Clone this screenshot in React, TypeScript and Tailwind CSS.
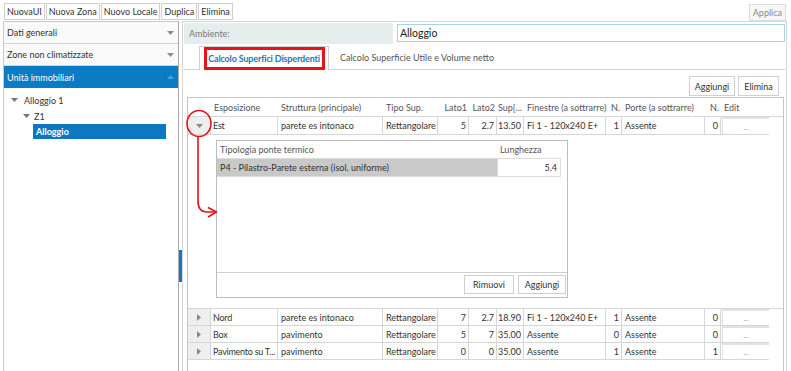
import React from "react";

const cols = [23, 67, 105, 55, 31, 28, 27, 82, 16, 83, 16, 48];

function TriDown({ color = "#7a7a7a" }: { color?: string }) {
  return (
    <svg width="7" height="4" viewBox="0 0 7 4">
      <polygon points="0,0 7,0 3.5,4" fill={color} />
    </svg>
  );
}
function TriUp({ color = "#7a7a7a" }: { color?: string }) {
  return (
    <svg width="7" height="4" viewBox="0 0 7 4">
      <polygon points="0,4 7,4 3.5,0" fill={color} />
    </svg>
  );
}
function TriRight() {
  return (
    <svg width="4" height="7" viewBox="0 0 4 7">
      <polygon points="0,0 4,3.5 0,7" fill="#8a8a8a" />
    </svg>
  );
}

const headers: { t: string; r?: boolean }[] = [
  { t: "" },
  { t: "Esposizione" },
  { t: "Struttura (principale)" },
  { t: "Tipo Sup." },
  { t: "Lato1", r: true },
  { t: "Lato2", r: true },
  { t: "Sup[...", r: true },
  { t: "Finestre (a sottrarre)" },
  { t: "N.", r: true },
  { t: "Porte (a sottrarre)" },
  { t: "N.", r: true },
  { t: "Edit" },
];

const rightCols = new Set([4, 5, 6, 8, 10]);

type Row = string[];
const rowEst: Row = ["Est", "parete es intonaco", "Rettangolare", "5", "2.7", "13.50", "Fi 1 - 120x240 E+", "1", "Assente", "0"];
const rowsBottom: Row[] = [
  ["Nord", "parete es intonaco", "Rettangolare", "7", "2.7", "18.90", "Fi 1 - 120x240 E+", "1", "Assente", "0"],
  ["Box", "pavimento", "Rettangolare", "5", "7", "35.00", "Assente", "0", "Assente", "0"],
  ["Pavimento su T...", "pavimento", "Rettangolare", "0", "0", "35.00", "Assente", "1", "Assente", "1"],
];

function DataRow({ row, expanded, h, top }: { row: Row; expanded?: boolean; h: number; top?: boolean }) {
  return (
    <div className={"flex " + (top ? "border-t border-[#d6d6d6]" : "")} style={{ height: h }}>
      <div
        className="flex items-center justify-center bg-[#efefef] border-r border-b border-[#d6d6d6] shrink-0"
        style={{ width: cols[0] }}
      >
        {expanded ? <TriDown color="#8a8a8a" /> : <TriRight />}
      </div>
      {row.map((c, i) => (
        <div
          key={i}
          className={
            "flex items-center border-r border-b border-[#d6d6d6] overflow-hidden whitespace-nowrap shrink-0 " +
            (rightCols.has(i + 1) ? "justify-end pr-[2px]" : i === 0 ? "pl-[2px] tracking-[-0.25px]" : "pl-[3px]")
          }
          style={{ width: cols[i + 1] }}
        >
          {c}
        </div>
      ))}
      <div className="border-b border-[#d6d6d6] shrink-0 flex flex-col" style={{ width: cols[11] }}>
        <div className="h-[2px] bg-[#e2e2e2] ml-[1px]" />
        <div className="flex-1 ml-[1px] border-l border-[#e0e0e0] flex items-center justify-center text-[#9a9a9a] text-[8px] leading-none">
          ...
        </div>
      </div>
    </div>
  );
}

export default function App() {
  return (
    <div className="w-[791px] h-[371px] overflow-hidden bg-white relative font-['Lato',sans-serif] text-[9px] text-[#333] leading-none whitespace-nowrap">
      {/* toolbar */}
      <div className="h-[21px] flex items-start justify-between pt-[3px] pl-[4px] pr-[5px]">
        <div className="flex gap-[1px]">
          {["NuovaUI", "Nuova Zona", "Nuovo Locale", "Duplica", "Elimina"].map((b) => (
            <div key={b} className="h-[17px] px-[2px] border border-[#cfcfcf] bg-white flex items-center text-[#333]">
              {b}
            </div>
          ))}
        </div>
        <div className="h-[17px] mt-[1px] px-[3px] border border-[#dedede] bg-[#f7f7f7] flex items-center text-[#8a8a8a]">
          Applica
        </div>
      </div>

      <div className="flex h-[350px]">
        {/* left panel */}
        <div className="ml-[3px] w-[176px] border-l border-r border-t border-[#c9c9c9] border-r-[#a9a9a9] flex flex-col">
          <div className="h-[22px] border-b border-[#d4d4d4] bg-[#fafafa] flex items-center justify-between pl-[3px] pr-[4px] text-[#333]">
            <span>Dati generali</span>
            <TriDown color="#8c8c8c" />
          </div>
          <div className="h-[22px] border-b border-[#d4d4d4] bg-[#fafafa] flex items-center justify-between pl-[3px] pr-[4px] text-[#333]">
            <span>Zone non climatizzate</span>
            <TriDown color="#8c8c8c" />
          </div>
          <div className="h-[22px] bg-[#0b7cc3] flex items-center justify-between pl-[3px] pr-[4px] text-white">
            <span>Unità immobiliari</span>
            <TriUp color="#4d9fd4" />
          </div>
          <div className="pt-[4px] flex flex-col">
            <div className="h-[16px] flex items-center pl-[7px] gap-[6px]">
              <TriDown color="#777" />
              <span>Alloggio 1</span>
            </div>
            <div className="h-[16px] flex items-center pl-[19px] gap-[4px]">
              <TriDown color="#777" />
              <span>Z1</span>
            </div>
            <div className="ml-[29px] w-[133px] h-[15px] bg-[#0b78c1] text-white font-bold flex items-center pl-[3px]">
              Alloggio
            </div>
          </div>
        </div>

        {/* splitter */}
        <div className="w-[3px] flex flex-col pt-[229px]">
          <div className="h-[32px] bg-[#1379c0]" />
        </div>

        {/* right panel */}
        <div className="w-[605px] border-l border-t border-r border-[#d6d6d6] flex flex-col">
          {/* Ambiente */}
          <div className="flex items-start pt-[1px] pl-[1px] pr-[1px] h-[24px]">
            <div className="w-[209px] h-[21px] bg-[#e5eded] flex items-center pl-[5px] text-[#7a7a7a]">Ambiente:</div>
            <div className="ml-[4px] flex-1 h-[18px] mt-[1px] border border-[#a6d3ea] flex items-center pl-[2px] text-[10.5px] text-[#222]">
              Alloggio
            </div>
          </div>
          {/* tabs */}
          <div className="h-[24px] ml-[1px] mr-[1px] border-b border-[#d0d0d0] flex items-end pl-[15px]">
            <div className="h-[24px] w-[130px] border-l border-r border-t border-[#d0d0d0] bg-white -mb-[1px] flex justify-center">
              <div className="w-[121px] h-[23px] border-[3px] border-[#e3141c] flex items-center justify-center text-[#1d74bd] font-bold tracking-[-0.15px]">
                Calcolo Superfici Disperdenti
              </div>
            </div>
            <div className="h-[23px] flex items-center pl-[11px] text-[#555]">Calcolo Superficie Utile e Volume netto</div>
          </div>
          {/* buttons */}
          <div className="h-[27px] flex items-end justify-end pr-[7px] gap-[3px] pb-[1px]">
            <div className="h-[20px] w-[46px] border border-[#d0d0d0] flex items-center justify-center">Aggiungi</div>
            <div className="h-[20px] w-[41px] border border-[#d0d0d0] flex items-center justify-center">Elimina</div>
          </div>
          {/* grid */}
          <div className="ml-[4px] w-[597px] flex-1 border-l border-t border-r border-[#c6c6c6] overflow-hidden">
            <div className="flex h-[18px] text-[#555]">
              {headers.map((hd, i) => (
                <div
                  key={i}
                  className={
                    "flex items-center whitespace-nowrap overflow-visible shrink-0 " +
                    (hd.r ? "justify-end pr-[2px]" : "pl-[3px]")
                  }
                  style={{ width: cols[i] }}
                >
                  {hd.t}
                </div>
              ))}
            </div>
            <DataRow row={rowEst} expanded h={19} top />
            {/* detail */}
            <div className="h-[173px] pl-[28px] pt-[5px]">
              <div className="w-[352px] h-[158px] border border-[#bdbdbd] flex flex-col">
                <div className="h-[17px] flex items-center text-[#555]">
                  <div className="w-[280px] pl-[3px]">Tipologia ponte termico</div>
                  <div className="pl-[3px]">Lunghezza</div>
                </div>
                <div className="h-[19px] flex border-t border-b border-[#dcdcdc] mr-[6px]">
                  <div className="w-[280px] bg-[#c9c9c9] flex items-center pl-[3px] text-[#333]">
                    P4 - Pilastro-Parete esterna (isol. uniforme)
                  </div>
                  <div className="flex-1 border-l border-r border-[#dcdcdc] flex items-center justify-end pr-[3px]">5.4</div>
                </div>
                <div className="flex-1" />
                <div className="h-[25px] border-t border-[#cfcfcf] flex items-start justify-end pt-[2px] pr-[1px] gap-[4px]">
                  <div className="w-[50px] h-[19px] border border-[#cfcfcf] flex items-center justify-center">Rimuovi</div>
                  <div className="w-[48px] h-[19px] border border-[#cfcfcf] flex items-center justify-center">Aggiungi</div>
                </div>
              </div>
            </div>
            {rowsBottom.map((r, i) => (
              <DataRow key={i} row={r} h={i === 0 ? 18 : 17} top={i === 0} />
            ))}
          </div>
        </div>
      </div>

      {/* red annotation overlay */}
      <svg className="absolute left-0 top-0 pointer-events-none" width="791" height="371" viewBox="0 0 791 371">
        <ellipse cx="199" cy="123.5" rx="12" ry="13" fill="none" stroke="#e3141c" strokeWidth="1.6" />
        <path d="M198 137 L198 201 Q198 212 207 212 L216 212" fill="none" stroke="#e3141c" strokeWidth="1.6" />
        <path d="M208 207.5 L216.5 212 L208 217" fill="none" stroke="#e3141c" strokeWidth="1.6" strokeLinejoin="round" />
      </svg>
    </div>
  );
}
